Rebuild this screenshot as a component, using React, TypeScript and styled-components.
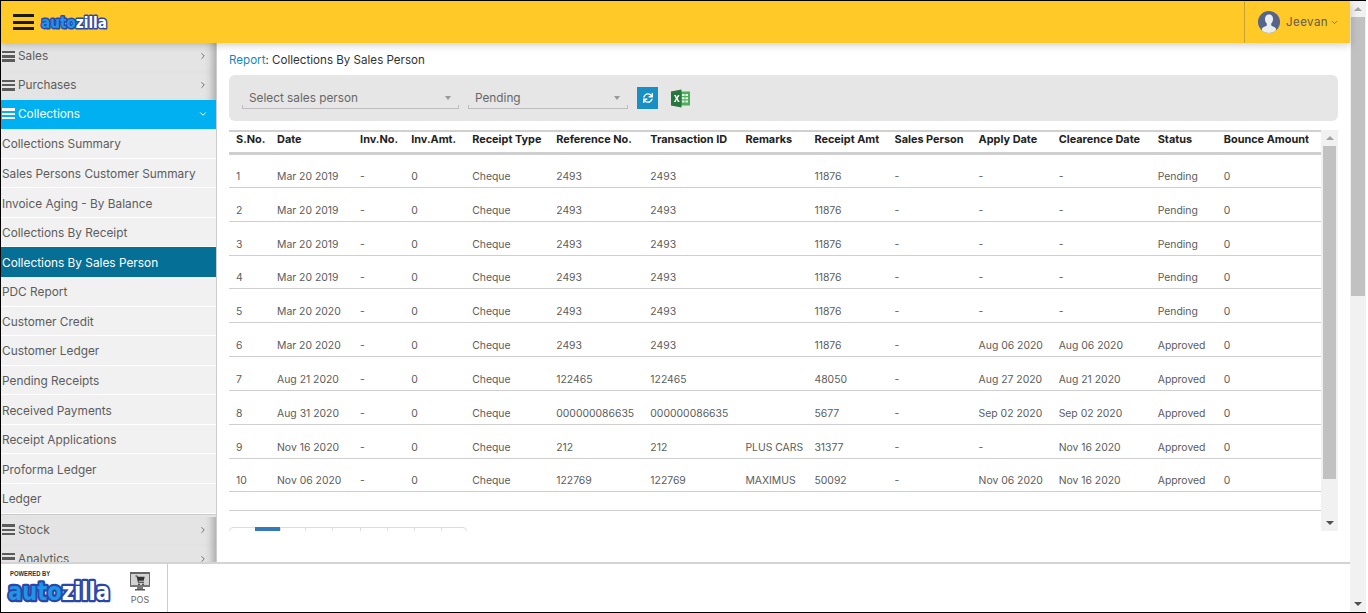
import React from "react";
import styled, { createGlobalStyle } from "styled-components";
import { FaSync } from "react-icons/fa";
import { ChevronDown, ChevronRight } from "lucide-react";

const GlobalStyle = createGlobalStyle`
  html, body {
    margin: 0;
    padding: 0;
    background: #fff;
    overflow: hidden;
  }
  body {
    font-family: Inter, "Open Sans", "Liberation Sans", sans-serif;
    color: #555;
  }
`;

const Frame = styled.div`
  box-sizing: border-box;
  width: 1366px;
  height: 613px;
  border-top: 1px solid #000;
  border-bottom: 1px solid #000;
  border-left: 1px solid #000;
  display: flex;
  overflow: hidden;
`;

const Page = styled.div`
  flex: 1;
  min-width: 0;
  display: flex;
  flex-direction: column;
`;

const Header = styled.header`
  height: 42px;
  flex: none;
  background: #ffca28;
  display: flex;
  align-items: center;
  box-shadow: 0 2px 8px rgba(0, 0, 0, 0.2);
  position: relative;
  z-index: 2;
`;

const Burger = styled.button`
  width: 21px;
  height: 16px;
  margin-left: 12px;
  padding: 0;
  border: 0;
  background: none;
  display: flex;
  flex-direction: column;
  justify-content: space-between;
  span {
    height: 3px;
    background: #1c1a14;
  }
`;

const HeaderLogo = styled.div`
  margin-left: 5px;
  margin-top: 1px;
  display: flex;
`;

const UserBox = styled.div`
  margin-left: auto;
  width: 106px;
  height: 100%;
  border-left: 1px solid #c9a32c;
  display: flex;
  align-items: center;
  padding-left: 13px;
  gap: 6px;
  box-sizing: border-box;
  font-size: 11.5px;
  letter-spacing: 0.45px;
  color: #5f5a48;
`;

const Caret = styled.span`
  display: inline-flex;
  margin-left: -4px;
`;

const Body = styled.div`
  flex: 1;
  min-height: 0;
  display: flex;
`;

const Sidebar = styled.nav`
  width: 216px;
  flex: none;
  overflow: hidden;
  box-sizing: border-box;
  border-right: 1px solid #ccc;
  background: #e4e4e4;
`;

const Section = styled.div<{ $open?: boolean }>`
  height: 28.7px;
  display: flex;
  align-items: center;
  padding: 0 8px 2px 1px;
  box-sizing: border-box;
  gap: 3px;
  font-size: 11.8px;
  background: ${(p) => (p.$open ? "#00b0f0" : "#e4e4e4")};
  color: ${(p) => (p.$open ? "#fff" : "#5c5c5c")};
  box-shadow: ${(p) =>
    p.$open ? "none" : "inset -10px 0 8px -7px rgba(0, 0, 0, 0.28)"};
`;

const SectionBars = styled.span`
  width: 13px;
  height: 11px;
  display: flex;
  flex-direction: column;
  justify-content: space-between;
  i {
    height: 2.4px;
    background: currentColor;
  }
`;

const SectionArrow = styled.span<{ $open?: boolean }>`
  margin-left: auto;
  display: inline-flex;
  color: ${(p) => (p.$open ? "#fff" : "#707070")};
`;

const SubList = styled.div`
  height: 386px;
  box-sizing: border-box;
  background: #f1f1f1;
  border-bottom: 1px solid #ccc;
  margin-bottom: 1.5px;
`;

const SubItem = styled.a<{ $active?: boolean }>`
  box-sizing: border-box;
  height: 29.58px;
  display: flex;
  align-items: center;
  padding: 2px 0 0 1px;
  font-size: 11.85px;
  white-space: nowrap;
  background: ${(p) => (p.$active ? "#066f96" : "#f1f1f1")};
  color: ${(p) => (p.$active ? "#fff" : "#5c5c5c")};
  border-bottom: 1px solid ${(p) => (p.$active ? "#066f96" : "#fff")};
`;

const Main = styled.main`
  flex: 1;
  min-width: 0;
  padding: 9px 12px 0 12px;
`;

const Title = styled.div`
  font-size: 11.6px;
  line-height: 16px;
  color: #333;
  span {
    color: #1a86bd;
  }
`;

const FilterPanel = styled.div`
  margin-top: 7px;
  height: 46px;
  background: #e6e6e6;
  border-radius: 6px;
  display: flex;
  align-items: center;
  padding-left: 13px;
`;

const Select = styled.div<{ $width: number }>`
  box-sizing: border-box;
  position: relative;
  width: ${(p) => p.$width}px;
  height: 21px;
  margin-right: 9px;
  padding: 0 8px 0 7px;
  display: flex;
  align-items: center;
  justify-content: space-between;
  border-bottom: 1px solid #bdbdbd;
  font-size: 11.8px;
  color: #666;
  &::before,
  &::after {
    content: "";
    position: absolute;
    bottom: 0;
    width: 1px;
    height: 3px;
    background: #bdbdbd;
  }
  &::before {
    left: 0;
  }
  &::after {
    right: 0;
  }
`;

const SelectArrow = styled.i`
  width: 0;
  height: 0;
  border-left: 3.5px solid transparent;
  border-right: 3.5px solid transparent;
  border-top: 4px solid #999;
`;

const RefreshButton = styled.button`
  width: 21px;
  height: 22px;
  padding: 0;
  border: 0;
  background: #1a8fc4;
  color: #fff;
  font-size: 10px;
  display: flex;
  align-items: center;
  justify-content: center;
`;

const ExcelLink = styled.a`
  margin-left: 13px;
  display: flex;
`;

const TableBox = styled.div`
  margin-top: 9px;
  height: 401px;
  display: flex;
  overflow: hidden;
`;

const TableScroll = styled.div`
  flex: 1;
  min-width: 0;
  overflow: hidden;
`;

const Table = styled.table`
  width: 100%;
  table-layout: fixed;
  border-collapse: collapse;
  font-size: 10.4px;
`;

const Col = styled.col<{ $w: number }>`
  width: ${(p) => p.$w}px;
`;

const Th = styled.th`
  height: 22px;
  padding: 0 0 6px 7px;
  border-top: 2px solid #d0d0d0;
  border-bottom: 3px solid #cfcfcf;
  text-align: left;
  font-weight: 700;
  font-size: 10.9px;
  color: #222;
  white-space: nowrap;
  box-sizing: border-box;
`;

const Td = styled.td`
  height: 33.85px;
  box-sizing: border-box;
  padding: 0 0 2px 7px;
  vertical-align: bottom;
  line-height: 16px;
  border-bottom: 1px solid #cfcfcf;
  color: #5c5c5c;
  white-space: nowrap;
`;

const EmptyCell = styled.td`
  height: 19px;
  padding: 0;
  box-sizing: border-box;
  border-bottom: 1px solid #cfcfcf;
`;

const Pagination = styled.ul`
  list-style: none;
  margin: 16px 0 0;
  padding: 0;
  display: flex;
  width: 238px;
  height: 34px;
  box-sizing: border-box;
  border: 1px solid #ddd;
  border-radius: 4px;
`;

const PageLink = styled.li<{ $w: number; $active?: boolean }>`
  width: ${(p) => p.$w}px;
  box-sizing: border-box;
  margin-top: ${(p) => (p.$active ? "-1px" : "0")};
  background: ${(p) => (p.$active ? "#337ab7" : "transparent")};
  border-left: ${(p) => (p.$active ? "0" : "1px solid #ddd")};
  &:first-child {
    border-left: 0;
  }
`;

const Scrollbar = styled.div<{ $width: number }>`
  width: ${(p) => p.$width}px;
  flex: none;
  background: #f1f1f1;
  display: flex;
  flex-direction: column;
  align-items: center;
`;

const ArrowBox = styled.div`
  height: 16px;
  flex: none;
  display: flex;
  align-items: center;
  justify-content: center;
`;

const ArrowGlyph = styled.i<{ $down?: boolean; $dark?: boolean }>`
  width: 0;
  height: 0;
  border-left: 4px solid transparent;
  border-right: 4px solid transparent;
  ${(p) =>
    p.$down
      ? `border-top: 4px solid ${p.$dark ? "#505050" : "#a3a3a3"};`
      : `border-bottom: 4px solid #a3a3a3;`}
`;

const Thumb = styled.div<{ $height: number; $width: number }>`
  width: ${(p) => p.$width}px;
  height: ${(p) => p.$height}px;
  flex: none;
  background: #c1c1c1;
`;

const Spacer = styled.div`
  flex: 1;
`;

const Footer = styled.footer`
  height: 50px;
  flex: none;
  box-sizing: border-box;
  border-top: 2px solid #d4d4d4;
  background: #fff;
  display: flex;
  position: relative;
  z-index: 2;
`;

const Brand = styled.div`
  width: 124px;
  flex: none;
  padding: 6px 0 0 4px;
  box-sizing: border-box;
`;

const PoweredBy = styled.div`
  font-family: "Liberation Sans", sans-serif;
  font-size: 7px;
  line-height: 8px;
  font-weight: 700;
  color: #333;
  margin-left: 5px;
  transform: scaleX(0.84);
  transform-origin: left center;
`;

const PosLink = styled.a`
  width: 43px;
  flex: none;
  box-sizing: border-box;
  border-right: 1px solid #ccc;
  height: 48px;
  padding: 8px 12px 0 0;
  display: flex;
  flex-direction: column;
  align-items: center;
  font-size: 9px;
  line-height: 12px;
  color: #666;
  gap: 3px;
`;

const LogoText = styled.text`
  font-family: "DejaVu Sans", sans-serif;
  font-weight: 700;
  paint-order: stroke;
  stroke: #2a46a8;
  stroke-linejoin: round;
`;

const Logo = ({ width, height }: { width: number; height: number }) => (
  <svg width={width} height={height} viewBox="0 0 104 26">
    <LogoText x="3" y="21" fontSize="24" textLength="98" lengthAdjust="spacingAndGlyphs" strokeWidth="4.5">
      <tspan fill="#1e95e6">auto</tspan>
      <tspan fill="#fff">zilla</tspan>
    </LogoText>
  </svg>
);

const Avatar = () => (
  <svg width="22" height="22" viewBox="0 0 23 23">
    <defs>
      <clipPath id="avatar-clip">
        <circle cx="11.5" cy="11.5" r="11.5" />
      </clipPath>
    </defs>
    <g clipPath="url(#avatar-clip)">
      <rect width="23" height="23" fill="#56638a" />
      <path
        d="M11.5 3.6c-2.7 0-4.2 2-4.2 4.8 0 2 .8 3.7 1.9 4.7v2c-1.4 1-4 1.6-5 3.2v4.7h14.6v-4.7c-1-1.6-3.6-2.2-5-3.2v-2c1.1-1 1.9-2.7 1.9-4.7 0-2.8-1.5-4.8-4.2-4.8z"
        fill="#e9edee"
      />
    </g>
  </svg>
);

const ExcelIcon = () => (
  <svg width="19" height="19" viewBox="0 0 19 19">
    <rect x="7" y="2.5" width="12" height="14" fill="#4fae5c" />
    <path
      d="M11 5h2.6v2H11zM14.4 5H17v2h-2.6zM11 8.2h2.6v2H11zM14.4 8.2H17v2h-2.6zM11 11.4h2.6v2H11zM14.4 11.4H17v2h-2.6z"
      fill="#e6f4e8"
    />
    <path d="M0 2.6 10.5 0.5v18L0 16.4z" fill="#26763d" />
    <path d="M3 6h1.8l1 2.2L6.9 6h1.7L6.7 9.4l2 3.6H6.9L5.7 10.6 4.6 13H2.9l2-3.6z" fill="#fff" />
  </svg>
);

const PosIcon = () => (
  <svg width="20" height="19" viewBox="0 0 20 19">
    <rect x="0.5" y="0.5" width="19" height="14" fill="#d2d2d2" stroke="#666" />
    <rect x="0" y="0" width="20" height="2" fill="#666" />
    <rect x="0" y="13" width="20" height="2" fill="#777" />
    <path d="M5.5 3.5h1.8l.4 1.2h7l-1 4H8.5l.3 1H14v1H8L6.6 4.5H5.5z" fill="#333" />
    <circle cx="9" cy="12.3" r="0.9" fill="#333" />
    <circle cx="13" cy="12.3" r="0.9" fill="#333" />
    <rect x="7" y="15" width="6" height="2" fill="#777" />
    <rect x="5" y="17" width="10" height="1.5" fill="#555" />
  </svg>
);

const columns: [string, number][] = [
  ["S.No.", 41],
  ["Date", 83],
  ["Inv.No.", 51],
  ["Inv.Amt.", 61],
  ["Receipt Type", 84],
  ["Reference No.", 94],
  ["Transaction ID", 95],
  ["Remarks", 69],
  ["Receipt Amt", 80],
  ["Sales Person", 84],
  ["Apply Date", 80],
  ["Clearence Date", 99],
  ["Status", 66],
  ["Bounce Amount", 104],
];

const rows: string[][] = [
  ["Mar 20 2019", "2493", "", "11876", "-", "-", "Pending"],
  ["Mar 20 2019", "2493", "", "11876", "-", "-", "Pending"],
  ["Mar 20 2019", "2493", "", "11876", "-", "-", "Pending"],
  ["Mar 20 2019", "2493", "", "11876", "-", "-", "Pending"],
  ["Mar 20 2020", "2493", "", "11876", "-", "-", "Pending"],
  ["Mar 20 2020", "2493", "", "11876", "Aug 06 2020", "Aug 06 2020", "Approved"],
  ["Aug 21 2020", "122465", "", "48050", "Aug 27 2020", "Aug 21 2020", "Approved"],
  ["Aug 31 2020", "000000086635", "", "5677", "Sep 02 2020", "Sep 02 2020", "Approved"],
  ["Nov 16 2020", "212", "PLUS CARS", "31377", "-", "Nov 16 2020", "Approved"],
  ["Nov 06 2020", "122769", "MAXIMUS", "50092", "Nov 06 2020", "Nov 16 2020", "Approved"],
];

const subItems = [
  "Collections Summary",
  "Sales Persons Customer Summary",
  "Invoice Aging - By Balance",
  "Collections By Receipt",
  "Collections By Sales Person",
  "PDC Report",
  "Customer Credit",
  "Customer Ledger",
  "Pending Receipts",
  "Received Payments",
  "Receipt Applications",
  "Proforma Ledger",
  "Ledger",
];

const pageWidths = [25, 25, 26, 27, 28, 27, 28, 27, 25];

const SectionRow = ({ label, open }: { label: string; open?: boolean }) => (
  <Section $open={open}>
    <SectionBars>
      <i />
      <i />
      <i />
    </SectionBars>
    {label}
    <SectionArrow $open={open}>
      {open ? <ChevronDown size={10} strokeWidth={2.4} /> : <ChevronRight size={10} strokeWidth={2.4} />}
    </SectionArrow>
  </Section>
);

export default function App() {
  return (
    <>
      <GlobalStyle />
      <Frame>
        <Page>
          <Header>
            <Burger aria-label="Menu">
              <span />
              <span />
              <span />
            </Burger>
            <HeaderLogo>
              <Logo width={70} height={18} />
            </HeaderLogo>
            <UserBox>
              <Avatar />
              Jeevan
              <Caret>
                <ChevronDown size={9} strokeWidth={2} />
              </Caret>
            </UserBox>
          </Header>
          <Body>
            <Sidebar>
              <SectionRow label="Sales" />
              <SectionRow label="Purchases" />
              <SectionRow label="Collections" open />
              <SubList>
                {subItems.map((item) => (
                  <SubItem key={item} $active={item === "Collections By Sales Person"}>
                    {item}
                  </SubItem>
                ))}
              </SubList>
              <SectionRow label="Stock" />
              <SectionRow label="Analytics" />
            </Sidebar>
            <Main>
              <Title>
                <span>Report</span>: Collections By Sales Person
              </Title>
              <FilterPanel>
                <Select $width={217}>
                  Select sales person
                  <SelectArrow />
                </Select>
                <Select $width={160}>
                  Pending
                  <SelectArrow />
                </Select>
                <RefreshButton aria-label="Refresh">
                  <FaSync />
                </RefreshButton>
                <ExcelLink>
                  <ExcelIcon />
                </ExcelLink>
              </FilterPanel>
              <TableBox>
                <TableScroll>
                  <Table>
                    <colgroup>
                      {columns.map(([name, w]) => (
                        <Col key={name} $w={w} />
                      ))}
                    </colgroup>
                    <thead>
                      <tr>
                        {columns.map(([name]) => (
                          <Th key={name}>{name}</Th>
                        ))}
                      </tr>
                    </thead>
                    <tbody>
                      {rows.map(([date, ref, remarks, amt, apply, clear, status], i) => (
                        <tr key={i}>
                          <Td>{i + 1}</Td>
                          <Td>{date}</Td>
                          <Td>-</Td>
                          <Td>0</Td>
                          <Td>Cheque</Td>
                          <Td>{ref}</Td>
                          <Td>{ref}</Td>
                          <Td>{remarks}</Td>
                          <Td>{amt}</Td>
                          <Td>-</Td>
                          <Td>{apply}</Td>
                          <Td>{clear}</Td>
                          <Td>{status}</Td>
                          <Td>0</Td>
                        </tr>
                      ))}
                      <tr>
                        <EmptyCell colSpan={14} />
                      </tr>
                    </tbody>
                  </Table>
                  <Pagination>
                    {pageWidths.map((w, i) => (
                      <PageLink key={i} $w={w} $active={i === 1} />
                    ))}
                  </Pagination>
                </TableScroll>
                <Scrollbar $width={17}>
                  <ArrowBox>
                    <ArrowGlyph />
                  </ArrowBox>
                  <Thumb $width={13} $height={333} />
                  <Spacer />
                  <ArrowBox>
                    <ArrowGlyph $down $dark />
                  </ArrowBox>
                </Scrollbar>
              </TableBox>
            </Main>
          </Body>
          <Footer>
            <Brand>
              <PoweredBy>POWERED BY</PoweredBy>
              <Logo width={108} height={27} />
            </Brand>
            <PosLink>
              <PosIcon />
              POS
            </PosLink>
          </Footer>
        </Page>
        <Scrollbar $width={16}>
          <ArrowBox>
            <ArrowGlyph />
          </ArrowBox>
          <Thumb $width={14} $height={279} />
          <Spacer />
          <ArrowBox>
            <ArrowGlyph $down $dark />
          </ArrowBox>
        </Scrollbar>
      </Frame>
    </>
  );
}
